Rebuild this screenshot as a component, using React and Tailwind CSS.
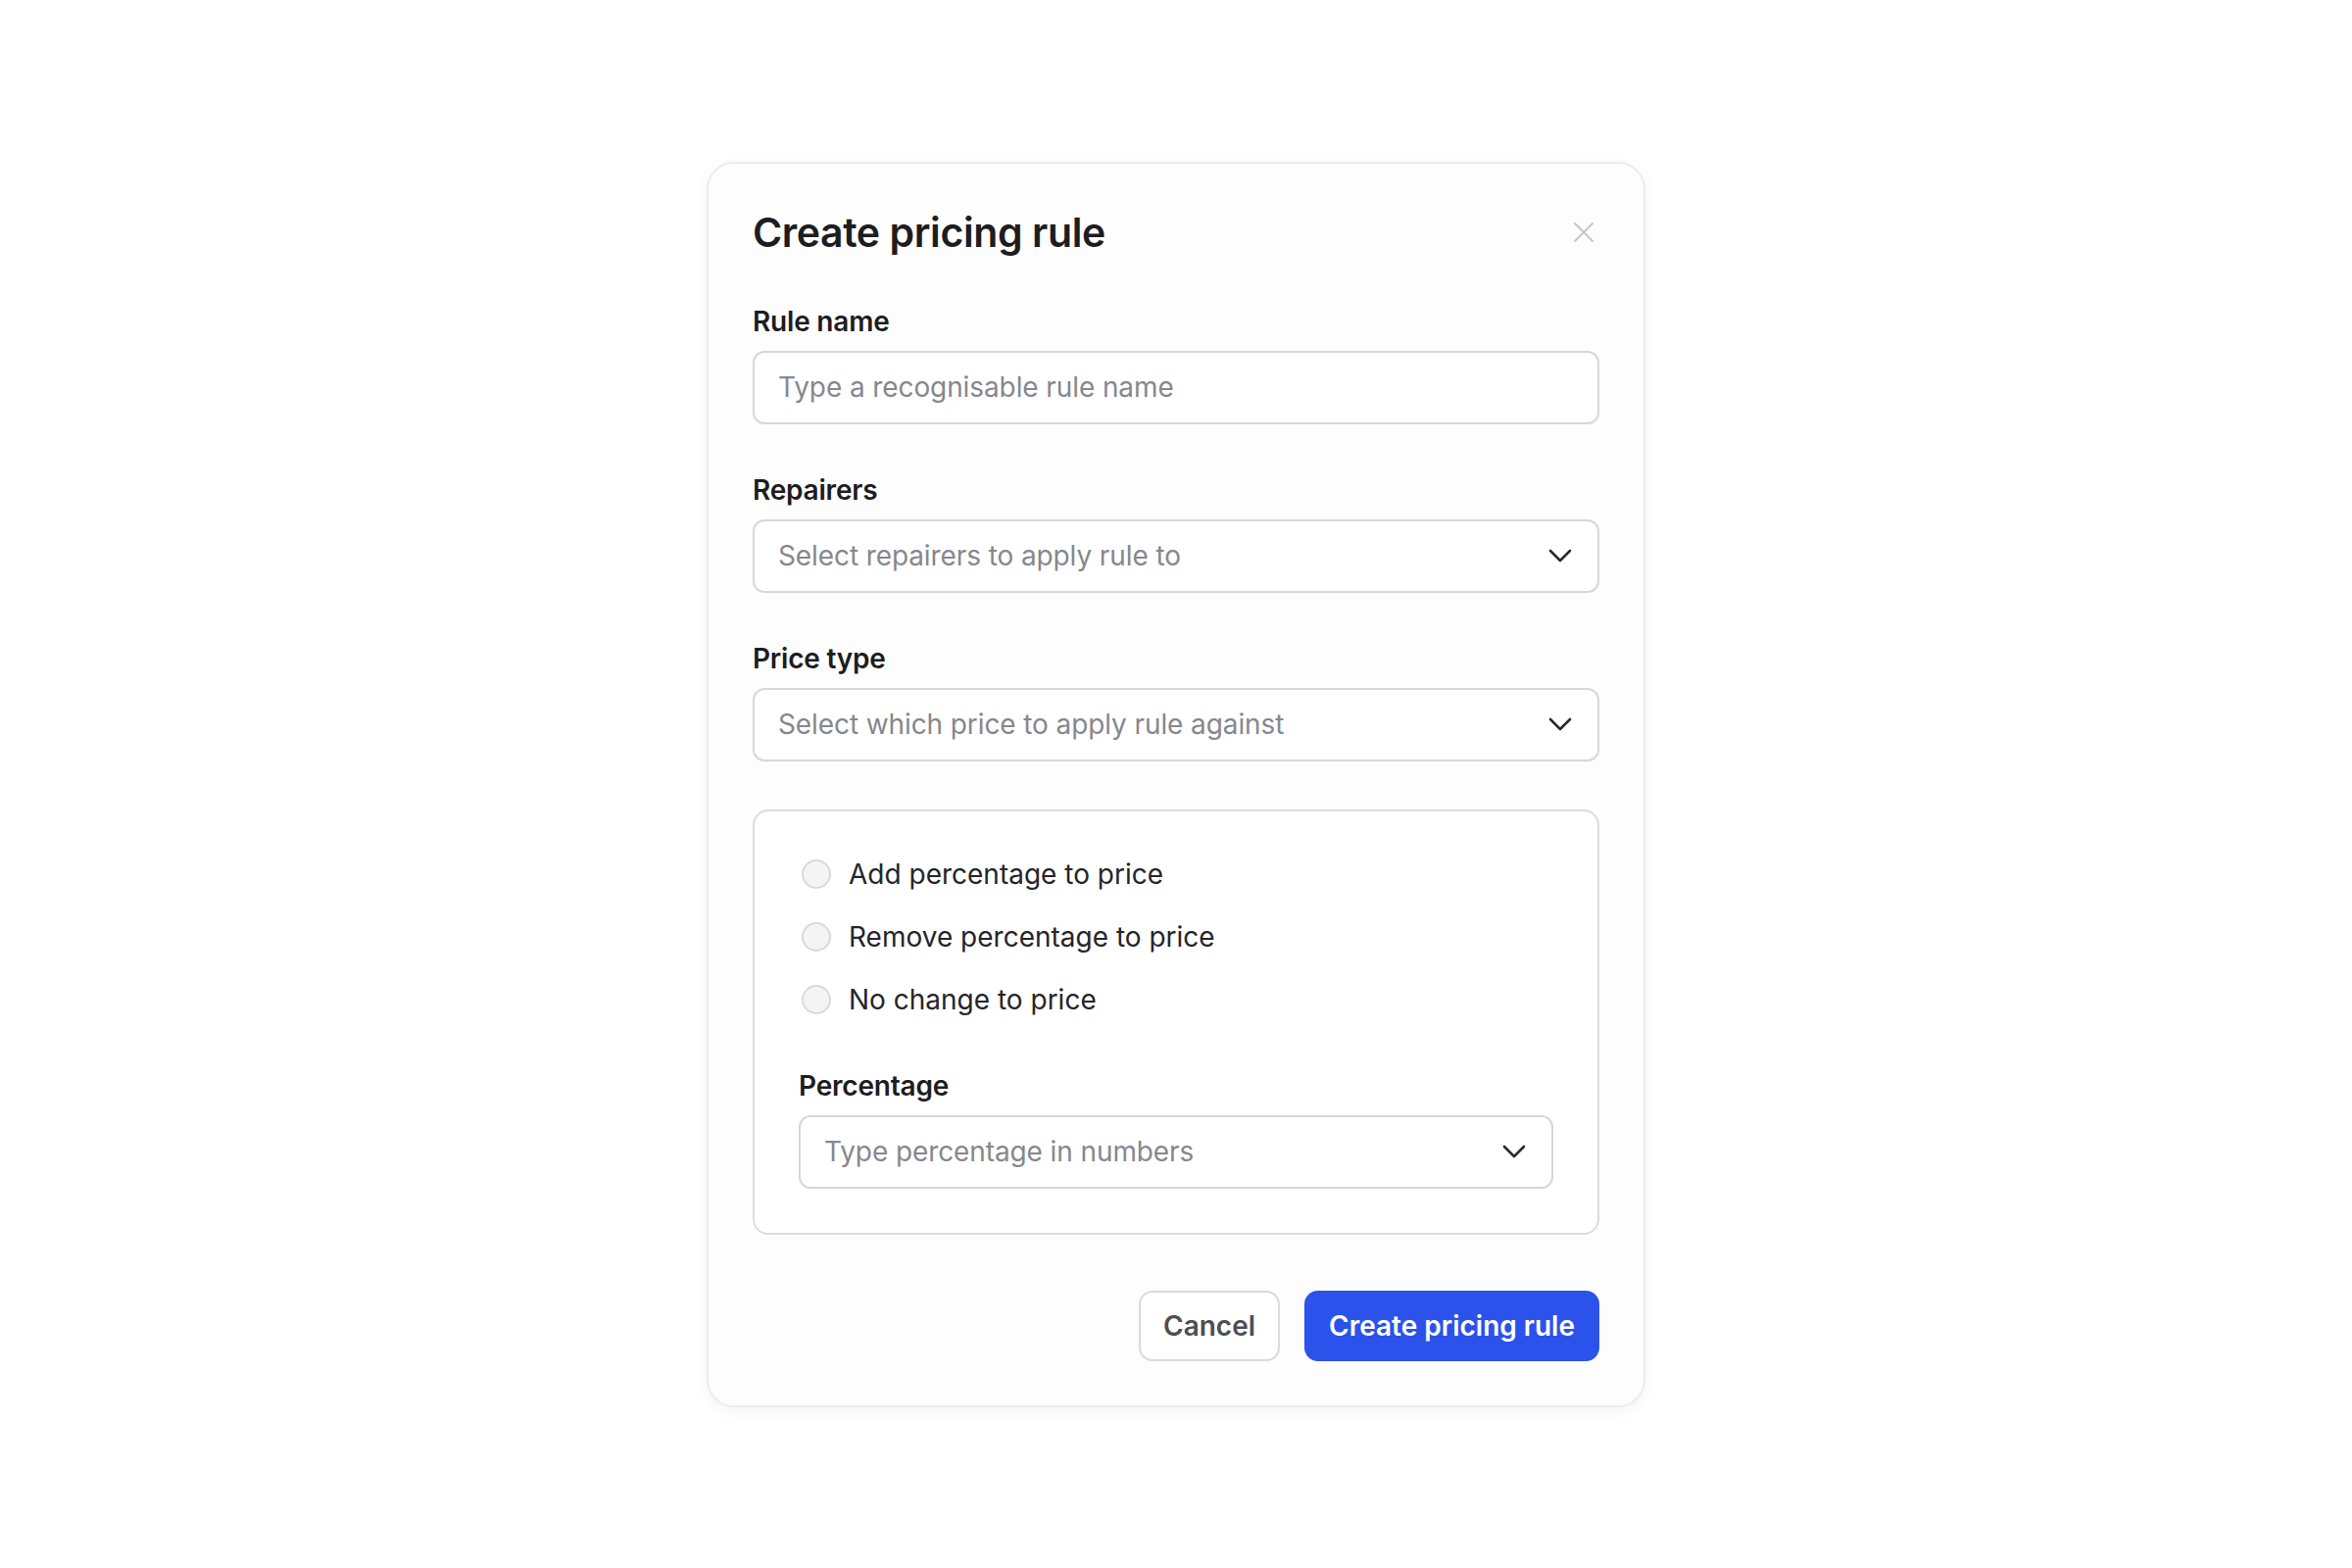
import React, { useState } from 'react';

const font = { fontFamily: 'Inter, "Noto Sans", sans-serif' };

function Chevron() {
  return (
    <svg width="24" height="14" viewBox="0 0 24 14" fill="none" className="shrink-0">
      <path d="M2 2l10 10L22 2" stroke="#2a2a2e" strokeWidth="2.6" strokeLinecap="round" strokeLinejoin="round" />
    </svg>
  );
}

function Field({ label, children }) {
  return (
    <div className="flex flex-col gap-[12px]">
      <label className="text-[28px] leading-[36px] font-semibold text-[#1d1d21] tracking-[-0.2px]">{label}</label>
      {children}
    </div>
  );
}

function SelectBox({ placeholder }) {
  return (
    <button
      type="button"
      className="flex items-center justify-between h-[75px] w-full rounded-[12px] border-2 border-[#d7d7db] bg-white pl-[24px] pr-[26px] text-left"
    >
      <span className="text-[28px] text-[#87878d] tracking-[-0.1px]">{placeholder}</span>
      <Chevron />
    </button>
  );
}

function Radio({ label, checked, onClick }) {
  return (
    <button type="button" onClick={onClick} className="flex items-center gap-[18px] h-[40px] text-left">
      <span className="ml-[3px] w-[30px] h-[30px] rounded-full border-2 border-[#d9d9dd] bg-[#f4f4f6] flex items-center justify-center">
        {checked && <span className="w-[12px] h-[12px] rounded-full bg-[#2c52ec]" />}
      </span>
      <span className="text-[28px] text-[#25252a]">{label}</span>
    </button>
  );
}

export default function App() {
  const [choice, setChoice] = useState(null);
  const options = ['Add percentage to price', 'Remove percentage to price', 'No change to price'];

  return (
    <div style={font} className="w-full h-[1600px] bg-white flex items-center justify-center">
      <div className="w-[958px] rounded-[28px] border-2 border-[#ececef] bg-[#fdfdfe] shadow-[0_4px_16px_rgba(0,0,0,0.05)] px-[45px] pt-[45px] pb-[45px] flex flex-col">
        <div className="flex items-center justify-between h-[50px]">
          <h2 className="text-[41px] leading-[50px] font-semibold text-[#1d1d21] tracking-[-0.4px]">Create pricing rule</h2>
          <button type="button" className="mr-[5px]">
            <svg width="22" height="22" viewBox="0 0 22 22" fill="none">
              <path d="M2 2l18 18M20 2L2 20" stroke="#c6c6cb" strokeWidth="2" strokeLinecap="round" />
            </svg>
          </button>
        </div>

        <div className="flex flex-col gap-[49px] mt-[48px]">
          <Field label="Rule name">
            <input
              className="h-[75px] w-full rounded-[12px] border-2 border-[#d7d7db] bg-white px-[24px] text-[28px] tracking-[-0.1px] text-[#25252a] placeholder:text-[#87878d] outline-none"
              placeholder="Type a recognisable rule name"
            />
          </Field>
          <Field label="Repairers">
            <SelectBox placeholder="Select repairers to apply rule to" />
          </Field>
          <Field label="Price type">
            <SelectBox placeholder="Select which price to apply rule against" />
          </Field>

          <div className="rounded-[16px] border-2 border-[#dcdce0] bg-white px-[45px] pt-[44px] pb-[45px] flex flex-col">
            <div className="flex flex-col gap-[24px]">
              {options.map((o, i) => (
                <Radio key={o} label={o} checked={choice === i} onClick={() => setChoice(i)} />
              ))}
            </div>
            <div className="mt-[50px]">
              <Field label="Percentage">
                <SelectBox placeholder="Type percentage in numbers" />
              </Field>
            </div>
          </div>
        </div>

        <div className="flex justify-end gap-[25px] mt-[57px]">
          <button type="button" className="h-[72px] px-[23px] rounded-[14px] border-2 border-[#dadade] bg-white text-[28px] font-semibold text-[#4e4e54]">
            Cancel
          </button>
          <button type="button" className="h-[72px] px-[25px] rounded-[14px] bg-[#2c52ec] text-[28px] font-semibold text-white">
            Create pricing rule
          </button>
        </div>
      </div>
    </div>
  );
}
